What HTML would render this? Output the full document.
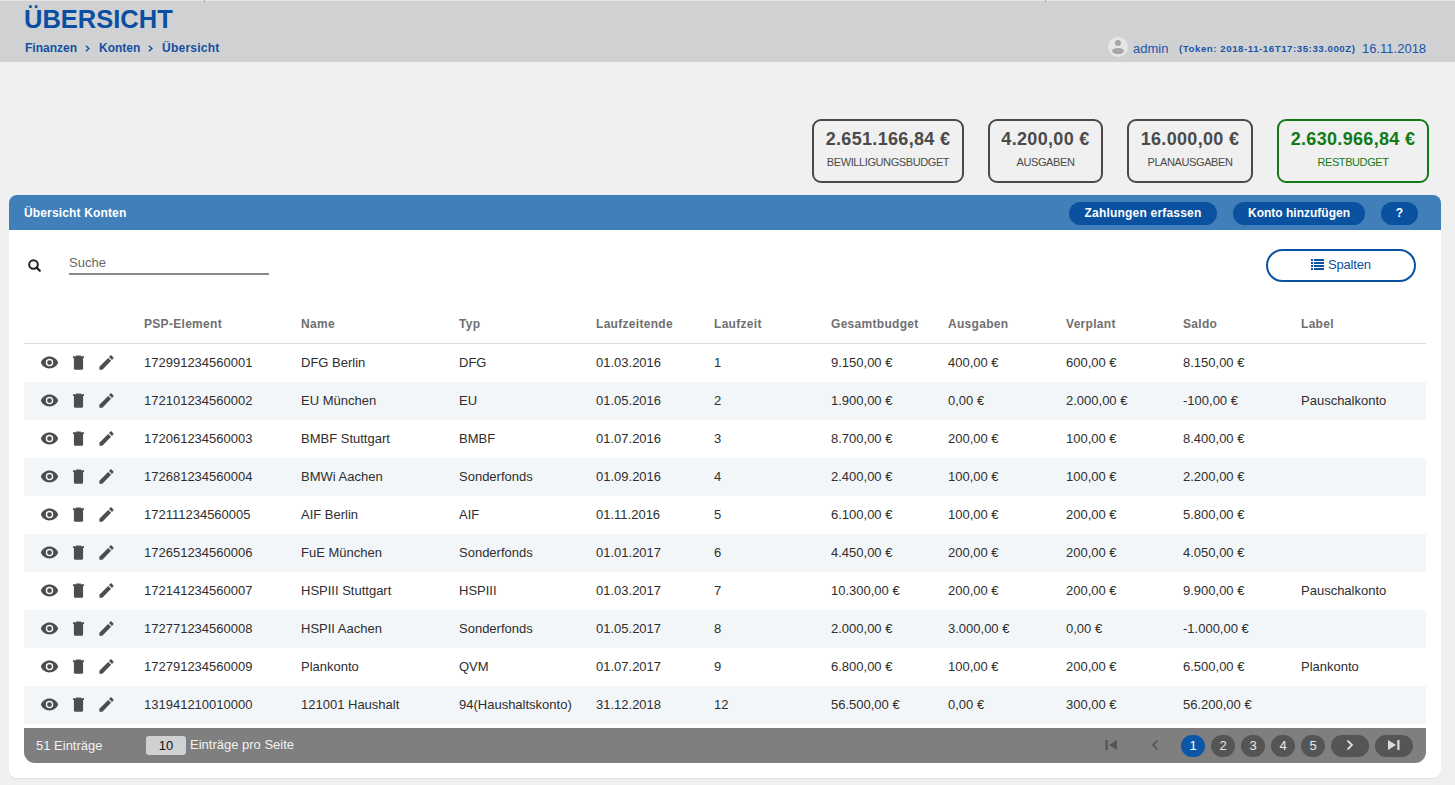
<!DOCTYPE html>
<html><head><meta charset="utf-8"><title>Übersicht</title>
<style>
*{margin:0;padding:0;box-sizing:border-box}
html,body{width:1455px;height:785px;overflow:hidden}
body{font-family:"Liberation Sans",sans-serif;background:#f0f0f0;position:relative;color:#333}
.abs{position:absolute;white-space:nowrap}
#hdr{left:0;top:0;width:1455px;height:62px;background:#d0d1d3;border-top:1px solid #e4e4e4}
#title{left:24px;top:4px;font-size:25.5px;font-weight:bold;color:#0b4fa2;line-height:30px}
.crumb{top:40.5px;font-size:12px;font-weight:bold;color:#1450a0;line-height:14px}
#crumb .sep{display:inline-block;margin:0 10px 0 9px;font-weight:normal}
#avatar{left:1108px;top:37px;width:20px;height:20px;border-radius:50%;background:#e6e6e6;overflow:hidden}
#avatar .h{position:absolute;left:6.8px;top:2.5px;width:6.4px;height:6.4px;border-radius:50%;background:#a6a6a6}
#avatar .b{position:absolute;left:3.8px;top:11px;width:12.4px;height:6px;border-radius:50%;background:#a6a6a6}
.uh{top:41px;line-height:15px;color:#1a55a8}
.stat{top:119px;height:64px;border:2px solid #4a4a4a;border-radius:9px;text-align:center;color:#4a4a4a}
.stat .v{position:absolute;left:-10px;right:-10px;top:8px;font-size:18px;font-weight:bold;line-height:20px;letter-spacing:0.33px}
.stat .l{position:absolute;left:-10px;right:-10px;top:35px;font-size:11px;line-height:12px;letter-spacing:-0.4px}
.stat.g{border-color:#117a17;color:#117a17}
#card{left:9px;top:195px;width:1432px;height:583px;background:#fff;border-radius:8px;box-shadow:0 1px 1px rgba(0,0,0,0.06)}
#chead{position:absolute;left:0;top:0;width:1432px;height:35px;background:#407fba;border-radius:8px 8px 0 0}
#chead .t{position:absolute;left:15px;top:11px;letter-spacing:0.15px;font-size:12px;font-weight:bold;color:#fff;line-height:14px;white-space:nowrap}
.btn{position:absolute;top:7px;height:23px;background:#0a52a0;border-radius:12px;color:#fff;font-size:12px;font-weight:bold;text-align:center;line-height:23px;white-space:nowrap}
#search{left:28px;top:259px;width:13px;height:13px}
#suche{left:69px;top:255px;font-size:13px;color:#666;line-height:15px}
#uline{left:69px;top:273px;width:200px;height:2px;background:#888}
#spalten{left:1266px;top:249px;width:150px;height:33px;border:2px solid #0a52a0;border-radius:17px}
#spalten .txt{position:absolute;left:60px;top:6px;letter-spacing:-0.2px;font-size:13px;color:#0a52a0;line-height:15px}
#spalten svg{position:absolute;left:43px;top:8px;width:13px;height:11px}
#thead{position:absolute;left:24px;top:300px;width:1402px;height:44px;border-bottom:1px solid #dcdcdc}
.th{position:absolute;top:17px;letter-spacing:0.3px;font-size:12px;font-weight:bold;color:#707070;line-height:14px;white-space:nowrap}
.tr{position:absolute;left:24px;width:1402px;height:38px;background:#fff}
.tr.odd{background:#f3f6f9}
.td{position:absolute;top:11px;font-size:13px;color:#2e2e2e;line-height:15px;white-space:nowrap}
.ic{position:absolute;top:9.25px;width:19px;height:19px;fill:#4d4d4d}
#foot{left:24px;top:728px;width:1402px;height:35px;background:#7f7f7f;border-radius:0 0 11px 11px}
.ft{position:absolute;font-size:13px;color:#f2f2f2;line-height:15px;white-space:nowrap}
#pp{left:146px;top:736px;width:40px;height:19px;background:#d0d1d3;border-radius:3px;text-align:center;font-size:13px;color:#111;line-height:19px}
.pg{position:absolute;top:735px;height:22px;border-radius:11px;background:#555;color:#e8e8e8;font-size:13px;text-align:center;line-height:22px}
.pg.act{background:#0b57a6;color:#fff}

</style></head>
<body>
<div id="hdr" class="abs"></div>
<div class="abs tick" style="left:204px;top:0;width:1px;height:2px;background:#a0a0ac"></div><div class="abs tick" style="left:1045px;top:0;width:1px;height:2px;background:#a0a0ac"></div>
<div id="title" class="abs">ÜBERSICHT</div>
<div class="abs crumb" style="left:25px">Finanzen</div><svg class="abs" style="left:85px;top:44.5px;width:5px;height:7px" viewBox="0 0 5 7"><path d="M0.9 0.7L3.9 3.5L0.9 6.3" fill="none" stroke="#1450a0" stroke-width="1.4"/></svg><div class="abs crumb" style="left:99px">Konten</div><svg class="abs" style="left:148px;top:44.5px;width:5px;height:7px" viewBox="0 0 5 7"><path d="M0.9 0.7L3.9 3.5L0.9 6.3" fill="none" stroke="#1450a0" stroke-width="1.4"/></svg><div class="abs crumb" style="left:162px;letter-spacing:0.25px">Übersicht</div>
<div id="avatar" class="abs"><div class="h"></div><div class="b"></div></div>
<div class="abs uh" style="left:1133px;font-size:13px">admin</div>
<div class="abs uh" style="left:1179px;top:40.5px;font-size:9.7px;font-weight:bold;letter-spacing:0.54px">(Token: 2018-11-16T17:35:33.000Z)</div>
<div class="abs uh" style="left:1362px;font-size:13px">16.11.2018</div>

<div class="abs stat" style="left:812px;width:152px"><div class="v">2.651.166,84 €</div><div class="l">BEWILLIGUNGSBUDGET</div></div>
<div class="abs stat" style="left:988px;width:115px"><div class="v">4.200,00 €</div><div class="l">AUSGABEN</div></div>
<div class="abs stat" style="left:1127px;width:126px"><div class="v">16.000,00 €</div><div class="l">PLANAUSGABEN</div></div>
<div class="abs stat g" style="left:1277px;width:152px"><div class="v">2.630.966,84 €</div><div class="l">RESTBUDGET</div></div>

<div id="card" class="abs">
  <div id="chead">
    <div class="t">Übersicht Konten</div>
    <div class="btn" style="left:1060px;width:148px;letter-spacing:0.2px">Zahlungen erfassen</div>
    <div class="btn" style="left:1224px;width:132px">Konto hinzufügen</div>
    <div class="btn" style="left:1372px;width:37px">?</div>
  </div>
</div>
<svg id="search" class="abs" viewBox="0 0 13 13"><circle cx="5.5" cy="5.5" r="4.3" fill="none" stroke="#222" stroke-width="2"/><path d="M8.6 8.6L11.8 11.8" stroke="#222" stroke-width="2.2" stroke-linecap="round"/></svg>
<div id="suche" class="abs">Suche</div>
<div id="uline" class="abs"></div>
<div id="spalten" class="abs"><svg viewBox="0 0 13 11"><g fill="#0a52a0"><rect x="0" y="0" width="2" height="2"/><rect x="3" y="0" width="10" height="2"/><rect x="0" y="3" width="2" height="2"/><rect x="3" y="3" width="10" height="2"/><rect x="0" y="6" width="2" height="2"/><rect x="3" y="6" width="10" height="2"/><rect x="0" y="9" width="2" height="2"/><rect x="3" y="9" width="10" height="2"/></g></svg><div class="txt">Spalten</div></div>

<div id="thead"><div class="th" style="left:120px">PSP-Element</div><div class="th" style="left:277px">Name</div><div class="th" style="left:435px">Typ</div><div class="th" style="left:572px">Laufzeitende</div><div class="th" style="left:690px">Laufzeit</div><div class="th" style="left:807px">Gesamtbudget</div><div class="th" style="left:924px">Ausgaben</div><div class="th" style="left:1042px">Verplant</div><div class="th" style="left:1159px">Saldo</div><div class="th" style="left:1277px">Label</div></div><div class="tr" style="top:344px"><svg class="ic" style="left:16.25px" viewBox="0 0 24 24"><path fill-rule="evenodd" d="M12 4.5C7 4.5 2.73 7.61 1 12c1.73 4.39 6 7.5 11 7.5s9.27-3.11 11-7.5C21.27 7.61 17 4.5 12 4.5zM12 16.7a4.7 4.7 0 1 1 0-9.4a4.7 4.7 0 1 1 0 9.4zM12 15a3 3 0 1 0 0-6a3 3 0 1 0 0 6z"/></svg><svg class="ic" style="left:44.5px" viewBox="0 0 24 24"><path d="M9 3h6v1.2H9zM5 4h14v2.3H5zM6.2 6h11.6v13.6c0 .9-.7 1.4-1.4 1.4H7.6c-.8 0-1.4-.6-1.4-1.4z"/></svg><svg class="ic" style="left:72.75px" viewBox="0 0 24 24"><path d="M3 17.25V21h3.75L17.810 9.94l-3.75-3.75L3 17.25zM20.71 7.04c.39-.39.39-1.02 0-1.41l-2.34-2.34c-.39-.39-1.020-.39-1.41 0l-1.83 1.83 3.75 3.75 1.83-1.830z"/></svg><div class="td" style="left:120px">172991234560001</div><div class="td" style="left:277px">DFG Berlin</div><div class="td" style="left:435px">DFG</div><div class="td" style="left:572px">01.03.2016</div><div class="td" style="left:690px">1</div><div class="td" style="left:807px">9.150,00 €</div><div class="td" style="left:924px">400,00 €</div><div class="td" style="left:1042px">600,00 €</div><div class="td" style="left:1159px">8.150,00 €</div></div><div class="tr odd" style="top:382px"><svg class="ic" style="left:16.25px" viewBox="0 0 24 24"><path fill-rule="evenodd" d="M12 4.5C7 4.5 2.73 7.61 1 12c1.73 4.39 6 7.5 11 7.5s9.27-3.11 11-7.5C21.27 7.61 17 4.5 12 4.5zM12 16.7a4.7 4.7 0 1 1 0-9.4a4.7 4.7 0 1 1 0 9.4zM12 15a3 3 0 1 0 0-6a3 3 0 1 0 0 6z"/></svg><svg class="ic" style="left:44.5px" viewBox="0 0 24 24"><path d="M9 3h6v1.2H9zM5 4h14v2.3H5zM6.2 6h11.6v13.6c0 .9-.7 1.4-1.4 1.4H7.6c-.8 0-1.4-.6-1.4-1.4z"/></svg><svg class="ic" style="left:72.75px" viewBox="0 0 24 24"><path d="M3 17.25V21h3.75L17.810 9.94l-3.75-3.75L3 17.25zM20.71 7.04c.39-.39.39-1.02 0-1.41l-2.34-2.34c-.39-.39-1.020-.39-1.41 0l-1.83 1.83 3.75 3.75 1.83-1.830z"/></svg><div class="td" style="left:120px">172101234560002</div><div class="td" style="left:277px">EU München</div><div class="td" style="left:435px">EU</div><div class="td" style="left:572px">01.05.2016</div><div class="td" style="left:690px">2</div><div class="td" style="left:807px">1.900,00 €</div><div class="td" style="left:924px">0,00 €</div><div class="td" style="left:1042px">2.000,00 €</div><div class="td" style="left:1159px">-100,00 €</div><div class="td" style="left:1277px">Pauschalkonto</div></div><div class="tr" style="top:420px"><svg class="ic" style="left:16.25px" viewBox="0 0 24 24"><path fill-rule="evenodd" d="M12 4.5C7 4.5 2.73 7.61 1 12c1.73 4.39 6 7.5 11 7.5s9.27-3.11 11-7.5C21.27 7.61 17 4.5 12 4.5zM12 16.7a4.7 4.7 0 1 1 0-9.4a4.7 4.7 0 1 1 0 9.4zM12 15a3 3 0 1 0 0-6a3 3 0 1 0 0 6z"/></svg><svg class="ic" style="left:44.5px" viewBox="0 0 24 24"><path d="M9 3h6v1.2H9zM5 4h14v2.3H5zM6.2 6h11.6v13.6c0 .9-.7 1.4-1.4 1.4H7.6c-.8 0-1.4-.6-1.4-1.4z"/></svg><svg class="ic" style="left:72.75px" viewBox="0 0 24 24"><path d="M3 17.25V21h3.75L17.810 9.94l-3.75-3.75L3 17.25zM20.71 7.04c.39-.39.39-1.02 0-1.41l-2.34-2.34c-.39-.39-1.020-.39-1.41 0l-1.83 1.83 3.75 3.75 1.83-1.830z"/></svg><div class="td" style="left:120px">172061234560003</div><div class="td" style="left:277px">BMBF Stuttgart</div><div class="td" style="left:435px">BMBF</div><div class="td" style="left:572px">01.07.2016</div><div class="td" style="left:690px">3</div><div class="td" style="left:807px">8.700,00 €</div><div class="td" style="left:924px">200,00 €</div><div class="td" style="left:1042px">100,00 €</div><div class="td" style="left:1159px">8.400,00 €</div></div><div class="tr odd" style="top:458px"><svg class="ic" style="left:16.25px" viewBox="0 0 24 24"><path fill-rule="evenodd" d="M12 4.5C7 4.5 2.73 7.61 1 12c1.73 4.39 6 7.5 11 7.5s9.27-3.11 11-7.5C21.27 7.61 17 4.5 12 4.5zM12 16.7a4.7 4.7 0 1 1 0-9.4a4.7 4.7 0 1 1 0 9.4zM12 15a3 3 0 1 0 0-6a3 3 0 1 0 0 6z"/></svg><svg class="ic" style="left:44.5px" viewBox="0 0 24 24"><path d="M9 3h6v1.2H9zM5 4h14v2.3H5zM6.2 6h11.6v13.6c0 .9-.7 1.4-1.4 1.4H7.6c-.8 0-1.4-.6-1.4-1.4z"/></svg><svg class="ic" style="left:72.75px" viewBox="0 0 24 24"><path d="M3 17.25V21h3.75L17.810 9.94l-3.75-3.75L3 17.25zM20.71 7.04c.39-.39.39-1.02 0-1.41l-2.34-2.34c-.39-.39-1.020-.39-1.41 0l-1.83 1.83 3.75 3.75 1.83-1.830z"/></svg><div class="td" style="left:120px">172681234560004</div><div class="td" style="left:277px">BMWi Aachen</div><div class="td" style="left:435px">Sonderfonds</div><div class="td" style="left:572px">01.09.2016</div><div class="td" style="left:690px">4</div><div class="td" style="left:807px">2.400,00 €</div><div class="td" style="left:924px">100,00 €</div><div class="td" style="left:1042px">100,00 €</div><div class="td" style="left:1159px">2.200,00 €</div></div><div class="tr" style="top:496px"><svg class="ic" style="left:16.25px" viewBox="0 0 24 24"><path fill-rule="evenodd" d="M12 4.5C7 4.5 2.73 7.61 1 12c1.73 4.39 6 7.5 11 7.5s9.27-3.11 11-7.5C21.27 7.61 17 4.5 12 4.5zM12 16.7a4.7 4.7 0 1 1 0-9.4a4.7 4.7 0 1 1 0 9.4zM12 15a3 3 0 1 0 0-6a3 3 0 1 0 0 6z"/></svg><svg class="ic" style="left:44.5px" viewBox="0 0 24 24"><path d="M9 3h6v1.2H9zM5 4h14v2.3H5zM6.2 6h11.6v13.6c0 .9-.7 1.4-1.4 1.4H7.6c-.8 0-1.4-.6-1.4-1.4z"/></svg><svg class="ic" style="left:72.75px" viewBox="0 0 24 24"><path d="M3 17.25V21h3.75L17.810 9.94l-3.75-3.75L3 17.25zM20.71 7.04c.39-.39.39-1.02 0-1.41l-2.34-2.34c-.39-.39-1.020-.39-1.41 0l-1.83 1.83 3.75 3.75 1.83-1.830z"/></svg><div class="td" style="left:120px">172111234560005</div><div class="td" style="left:277px">AIF Berlin</div><div class="td" style="left:435px">AIF</div><div class="td" style="left:572px">01.11.2016</div><div class="td" style="left:690px">5</div><div class="td" style="left:807px">6.100,00 €</div><div class="td" style="left:924px">100,00 €</div><div class="td" style="left:1042px">200,00 €</div><div class="td" style="left:1159px">5.800,00 €</div></div><div class="tr odd" style="top:534px"><svg class="ic" style="left:16.25px" viewBox="0 0 24 24"><path fill-rule="evenodd" d="M12 4.5C7 4.5 2.73 7.61 1 12c1.73 4.39 6 7.5 11 7.5s9.27-3.11 11-7.5C21.27 7.61 17 4.5 12 4.5zM12 16.7a4.7 4.7 0 1 1 0-9.4a4.7 4.7 0 1 1 0 9.4zM12 15a3 3 0 1 0 0-6a3 3 0 1 0 0 6z"/></svg><svg class="ic" style="left:44.5px" viewBox="0 0 24 24"><path d="M9 3h6v1.2H9zM5 4h14v2.3H5zM6.2 6h11.6v13.6c0 .9-.7 1.4-1.4 1.4H7.6c-.8 0-1.4-.6-1.4-1.4z"/></svg><svg class="ic" style="left:72.75px" viewBox="0 0 24 24"><path d="M3 17.25V21h3.75L17.810 9.94l-3.75-3.75L3 17.25zM20.71 7.04c.39-.39.39-1.02 0-1.41l-2.34-2.34c-.39-.39-1.020-.39-1.41 0l-1.83 1.83 3.75 3.75 1.83-1.830z"/></svg><div class="td" style="left:120px">172651234560006</div><div class="td" style="left:277px">FuE München</div><div class="td" style="left:435px">Sonderfonds</div><div class="td" style="left:572px">01.01.2017</div><div class="td" style="left:690px">6</div><div class="td" style="left:807px">4.450,00 €</div><div class="td" style="left:924px">200,00 €</div><div class="td" style="left:1042px">200,00 €</div><div class="td" style="left:1159px">4.050,00 €</div></div><div class="tr" style="top:572px"><svg class="ic" style="left:16.25px" viewBox="0 0 24 24"><path fill-rule="evenodd" d="M12 4.5C7 4.5 2.73 7.61 1 12c1.73 4.39 6 7.5 11 7.5s9.27-3.11 11-7.5C21.27 7.61 17 4.5 12 4.5zM12 16.7a4.7 4.7 0 1 1 0-9.4a4.7 4.7 0 1 1 0 9.4zM12 15a3 3 0 1 0 0-6a3 3 0 1 0 0 6z"/></svg><svg class="ic" style="left:44.5px" viewBox="0 0 24 24"><path d="M9 3h6v1.2H9zM5 4h14v2.3H5zM6.2 6h11.6v13.6c0 .9-.7 1.4-1.4 1.4H7.6c-.8 0-1.4-.6-1.4-1.4z"/></svg><svg class="ic" style="left:72.75px" viewBox="0 0 24 24"><path d="M3 17.25V21h3.75L17.810 9.94l-3.75-3.75L3 17.25zM20.71 7.04c.39-.39.39-1.02 0-1.41l-2.34-2.34c-.39-.39-1.020-.39-1.41 0l-1.83 1.83 3.75 3.75 1.83-1.830z"/></svg><div class="td" style="left:120px">172141234560007</div><div class="td" style="left:277px">HSPIII Stuttgart</div><div class="td" style="left:435px">HSPIII</div><div class="td" style="left:572px">01.03.2017</div><div class="td" style="left:690px">7</div><div class="td" style="left:807px">10.300,00 €</div><div class="td" style="left:924px">200,00 €</div><div class="td" style="left:1042px">200,00 €</div><div class="td" style="left:1159px">9.900,00 €</div><div class="td" style="left:1277px">Pauschalkonto</div></div><div class="tr odd" style="top:610px"><svg class="ic" style="left:16.25px" viewBox="0 0 24 24"><path fill-rule="evenodd" d="M12 4.5C7 4.5 2.73 7.61 1 12c1.73 4.39 6 7.5 11 7.5s9.27-3.11 11-7.5C21.27 7.61 17 4.5 12 4.5zM12 16.7a4.7 4.7 0 1 1 0-9.4a4.7 4.7 0 1 1 0 9.4zM12 15a3 3 0 1 0 0-6a3 3 0 1 0 0 6z"/></svg><svg class="ic" style="left:44.5px" viewBox="0 0 24 24"><path d="M9 3h6v1.2H9zM5 4h14v2.3H5zM6.2 6h11.6v13.6c0 .9-.7 1.4-1.4 1.4H7.6c-.8 0-1.4-.6-1.4-1.4z"/></svg><svg class="ic" style="left:72.75px" viewBox="0 0 24 24"><path d="M3 17.25V21h3.75L17.810 9.94l-3.75-3.75L3 17.25zM20.71 7.04c.39-.39.39-1.02 0-1.41l-2.34-2.34c-.39-.39-1.020-.39-1.41 0l-1.83 1.83 3.75 3.75 1.83-1.830z"/></svg><div class="td" style="left:120px">172771234560008</div><div class="td" style="left:277px">HSPII Aachen</div><div class="td" style="left:435px">Sonderfonds</div><div class="td" style="left:572px">01.05.2017</div><div class="td" style="left:690px">8</div><div class="td" style="left:807px">2.000,00 €</div><div class="td" style="left:924px">3.000,00 €</div><div class="td" style="left:1042px">0,00 €</div><div class="td" style="left:1159px">-1.000,00 €</div></div><div class="tr" style="top:648px"><svg class="ic" style="left:16.25px" viewBox="0 0 24 24"><path fill-rule="evenodd" d="M12 4.5C7 4.5 2.73 7.61 1 12c1.73 4.39 6 7.5 11 7.5s9.27-3.11 11-7.5C21.27 7.61 17 4.5 12 4.5zM12 16.7a4.7 4.7 0 1 1 0-9.4a4.7 4.7 0 1 1 0 9.4zM12 15a3 3 0 1 0 0-6a3 3 0 1 0 0 6z"/></svg><svg class="ic" style="left:44.5px" viewBox="0 0 24 24"><path d="M9 3h6v1.2H9zM5 4h14v2.3H5zM6.2 6h11.6v13.6c0 .9-.7 1.4-1.4 1.4H7.6c-.8 0-1.4-.6-1.4-1.4z"/></svg><svg class="ic" style="left:72.75px" viewBox="0 0 24 24"><path d="M3 17.25V21h3.75L17.810 9.94l-3.75-3.75L3 17.25zM20.71 7.04c.39-.39.39-1.02 0-1.41l-2.34-2.34c-.39-.39-1.020-.39-1.41 0l-1.83 1.83 3.75 3.75 1.83-1.830z"/></svg><div class="td" style="left:120px">172791234560009</div><div class="td" style="left:277px">Plankonto</div><div class="td" style="left:435px">QVM</div><div class="td" style="left:572px">01.07.2017</div><div class="td" style="left:690px">9</div><div class="td" style="left:807px">6.800,00 €</div><div class="td" style="left:924px">100,00 €</div><div class="td" style="left:1042px">200,00 €</div><div class="td" style="left:1159px">6.500,00 €</div><div class="td" style="left:1277px">Plankonto</div></div><div class="tr odd" style="top:686px"><svg class="ic" style="left:16.25px" viewBox="0 0 24 24"><path fill-rule="evenodd" d="M12 4.5C7 4.5 2.73 7.61 1 12c1.73 4.39 6 7.5 11 7.5s9.27-3.11 11-7.5C21.27 7.61 17 4.5 12 4.5zM12 16.7a4.7 4.7 0 1 1 0-9.4a4.7 4.7 0 1 1 0 9.4zM12 15a3 3 0 1 0 0-6a3 3 0 1 0 0 6z"/></svg><svg class="ic" style="left:44.5px" viewBox="0 0 24 24"><path d="M9 3h6v1.2H9zM5 4h14v2.3H5zM6.2 6h11.6v13.6c0 .9-.7 1.4-1.4 1.4H7.6c-.8 0-1.4-.6-1.4-1.4z"/></svg><svg class="ic" style="left:72.75px" viewBox="0 0 24 24"><path d="M3 17.25V21h3.75L17.810 9.94l-3.75-3.75L3 17.25zM20.71 7.04c.39-.39.39-1.02 0-1.41l-2.34-2.34c-.39-.39-1.020-.39-1.41 0l-1.83 1.83 3.75 3.75 1.83-1.830z"/></svg><div class="td" style="left:120px">131941210010000</div><div class="td" style="left:277px">121001 Haushalt</div><div class="td" style="left:435px">94(Haushaltskonto)</div><div class="td" style="left:572px">31.12.2018</div><div class="td" style="left:690px">12</div><div class="td" style="left:807px">56.500,00 €</div><div class="td" style="left:924px">0,00 €</div><div class="td" style="left:1042px">300,00 €</div><div class="td" style="left:1159px">56.200,00 €</div></div>
<div id="foot" class="abs"></div>
<div class="ft" style="left:36px;top:738px">51 Einträge</div>
<div id="pp" class="abs">10</div>
<div class="ft" style="left:190px;top:737px">Einträge pro Seite</div>
<svg class="abs" style="left:1105px;top:740px;width:12px;height:10px" viewBox="0 0 12 10"><rect x="0.5" y="0" width="2.2" height="10" fill="#555"/><path d="M12 0V10L4 5Z" fill="#555"/></svg>
<svg class="abs" style="left:1151px;top:740px;width:8px;height:10px" viewBox="0 0 8 10"><path d="M6.5 0.5L2 5L6.5 9.5" fill="none" stroke="#555" stroke-width="1.6"/></svg>
<div class="pg act" style="left:1181px;width:24px">1</div>
<div class="pg" style="left:1211px;width:24px">2</div>
<div class="pg" style="left:1241px;width:24px">3</div>
<div class="pg" style="left:1271px;width:24px">4</div>
<div class="pg" style="left:1301px;width:24px">5</div>
<div class="pg" style="left:1331px;width:38px"></div>
<svg class="abs" style="left:1346px;top:740px;width:8px;height:10px" viewBox="0 0 8 10"><path d="M1.5 0.5L6 5L1.5 9.5" fill="none" stroke="#dcdcdc" stroke-width="1.8"/></svg>
<div class="pg" style="left:1375px;width:38px"></div>
<svg class="abs" style="left:1388px;top:740px;width:12px;height:10px" viewBox="0 0 12 10"><path d="M0 0V10L8 5Z" fill="#dcdcdc"/><rect x="9.3" y="0" width="2.2" height="10" fill="#dcdcdc"/></svg>

</body></html>
